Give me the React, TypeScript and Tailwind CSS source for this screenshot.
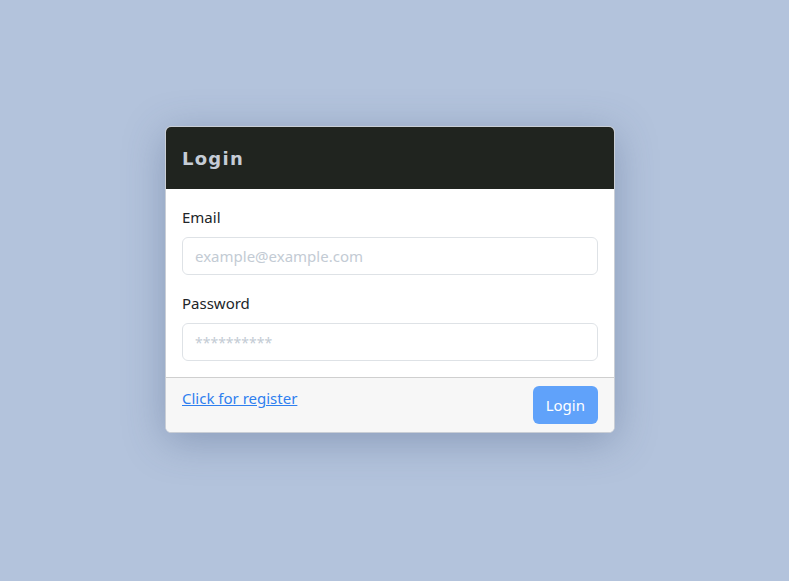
const App = () => {
  return (
    <div className="min-h-[581px] w-full bg-[#b3c3dc] pt-[126px] pl-[165px] font-['Noto_Sans',sans-serif]">
      <div className="w-[450px] overflow-hidden rounded-md border border-[#c9ced6] bg-white shadow-[0_8px_40px_rgba(60,80,120,0.35)]">
        <div className="flex h-[62px] items-center bg-[#20241f] px-4">
          <h2 className="font-['DejaVu_Sans',sans-serif] text-[18px] font-bold tracking-[0.07em] text-[#c5ccd6]">
            Login
          </h2>
        </div>
        <form className="flex flex-col gap-4 p-4">
          <div className="flex flex-col gap-2">
            <label className="text-[15px] leading-6 text-[#212529]">Email</label>
            <input
              type="email"
              placeholder="example@example.com"
              className="h-[38px] rounded-md border border-[#dee2e6] px-3 text-[15px] text-[#212529] outline-none placeholder:text-[#c3cbd4]"
            />
          </div>
          <div className="flex flex-col gap-2">
            <label className="text-[15px] leading-6 text-[#212529]">Password</label>
            <input
              type="password"
              placeholder="**********"
              className="h-[38px] rounded-md border border-[#dee2e6] px-3 text-[14px] text-[#212529] outline-none placeholder:text-[#c3cbd4]"
            />
          </div>
        </form>
        <div className="flex items-start justify-between border-t border-[#cfcfcf] bg-[#f7f7f7] px-4 pt-2 pb-2">
          <a href="#" className="text-[15px] leading-6 text-[#2f7fef] underline">
            Click for register
          </a>
          <button className="h-[38px] rounded-md bg-[#60a2fa] px-[13px] text-[15px] text-white">
            Login
          </button>
        </div>
      </div>
    </div>
  );
};

export default App;
